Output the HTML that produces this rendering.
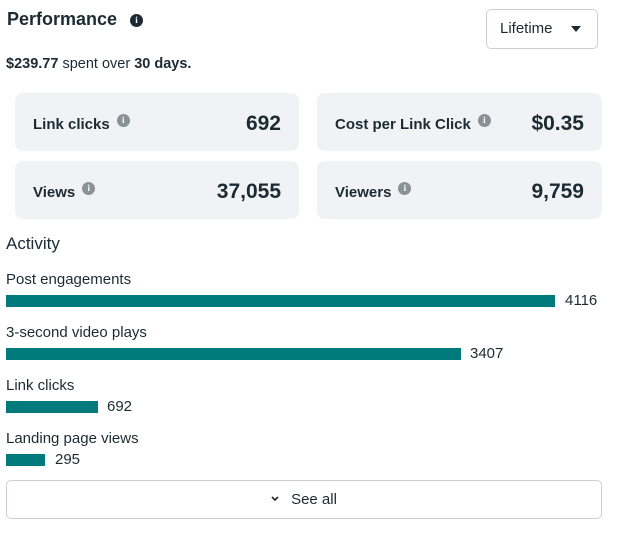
<!DOCTYPE html>
<html><head><style>
body{margin:0;width:619px;height:533px;background:#fff;font-family:"Liberation Sans",sans-serif;color:#1c2b33;position:relative;overflow:hidden}
.a{position:absolute}
.card{position:absolute;background:#f0f2f5;border-radius:8px;height:58px}
.lbl{position:absolute;left:18px;top:21px;font-size:15px;font-weight:bold}
.val{position:absolute;right:18px;top:19px;font-size:21px;font-weight:bold}
.i{display:inline-block;width:13px;height:13px;border-radius:50%;background:#8a9299;color:#fff;font-size:9px;font-weight:bold;text-align:center;line-height:13px;vertical-align:6px;margin-left:7px;font-family:"Liberation Serif",serif}
.bar{position:absolute;left:6px;height:12px;background:#007a7a}
.t{position:absolute;font-size:15px}
</style></head><body>
<div class="a" style="left:7px;top:9px;font-size:18px;font-weight:bold">Performance <span class="i" style="background:#1c2b33;width:13px;height:13px;line-height:13px;vertical-align:2px;margin-left:8px">i</span></div>
<div class="a" style="left:486px;top:9px;width:112px;height:40px;border:1px solid #ccd0d5;border-radius:5px;box-sizing:border-box;font-size:15px;line-height:38px;padding-left:13px">Lifetime <span style="position:absolute;left:84px;top:16px;width:0;height:0;border-left:5px solid transparent;border-right:5px solid transparent;border-top:6px solid #1c2b33"></span></div>
<div class="a" style="left:6px;top:56px;font-size:14.5px"><b>$239.77</b> spent over <b>30 days.</b></div>
<div class="card" style="left:15px;top:93px;width:284px"><span class="lbl">Link clicks<span class="i">i</span></span><span class="val">692</span></div>
<div class="card" style="left:317px;top:93px;width:285px"><span class="lbl">Cost per Link Click<span class="i">i</span></span><span class="val">$0.35</span></div>
<div class="card" style="left:15px;top:161px;width:284px"><span class="lbl">Views<span class="i">i</span></span><span class="val">37,055</span></div>
<div class="card" style="left:317px;top:161px;width:285px"><span class="lbl">Viewers<span class="i">i</span></span><span class="val">9,759</span></div>
<div class="a" style="left:6px;top:234px;font-size:17px">Activity</div>
<div class="t" style="left:6px;top:271px">Post engagements</div>
<div class="bar" style="top:295px;width:549px"></div><div class="t" style="left:565px;top:292px">4116</div>
<div class="t" style="left:6px;top:324px">3-second video plays</div>
<div class="bar" style="top:348px;width:455px"></div><div class="t" style="left:470px;top:345px">3407</div>
<div class="t" style="left:6px;top:377px">Link clicks</div>
<div class="bar" style="top:401px;width:92px"></div><div class="t" style="left:107px;top:398px">692</div>
<div class="t" style="left:6px;top:430px">Landing page views</div>
<div class="bar" style="top:454px;width:39px"></div><div class="t" style="left:55px;top:451px">295</div>
<div class="a" style="left:6px;top:480px;width:596px;height:39px;border:1px solid #ccd0d5;border-radius:5px;box-sizing:border-box;text-align:center;line-height:37px;font-size:15px"><svg width="8" height="6" style="margin-right:12px;vertical-align:2px"><path d="M1 1 L4 4 L7 1" stroke="#1c2b33" stroke-width="1.6" fill="none"/></svg>See all</div>
</body></html>
